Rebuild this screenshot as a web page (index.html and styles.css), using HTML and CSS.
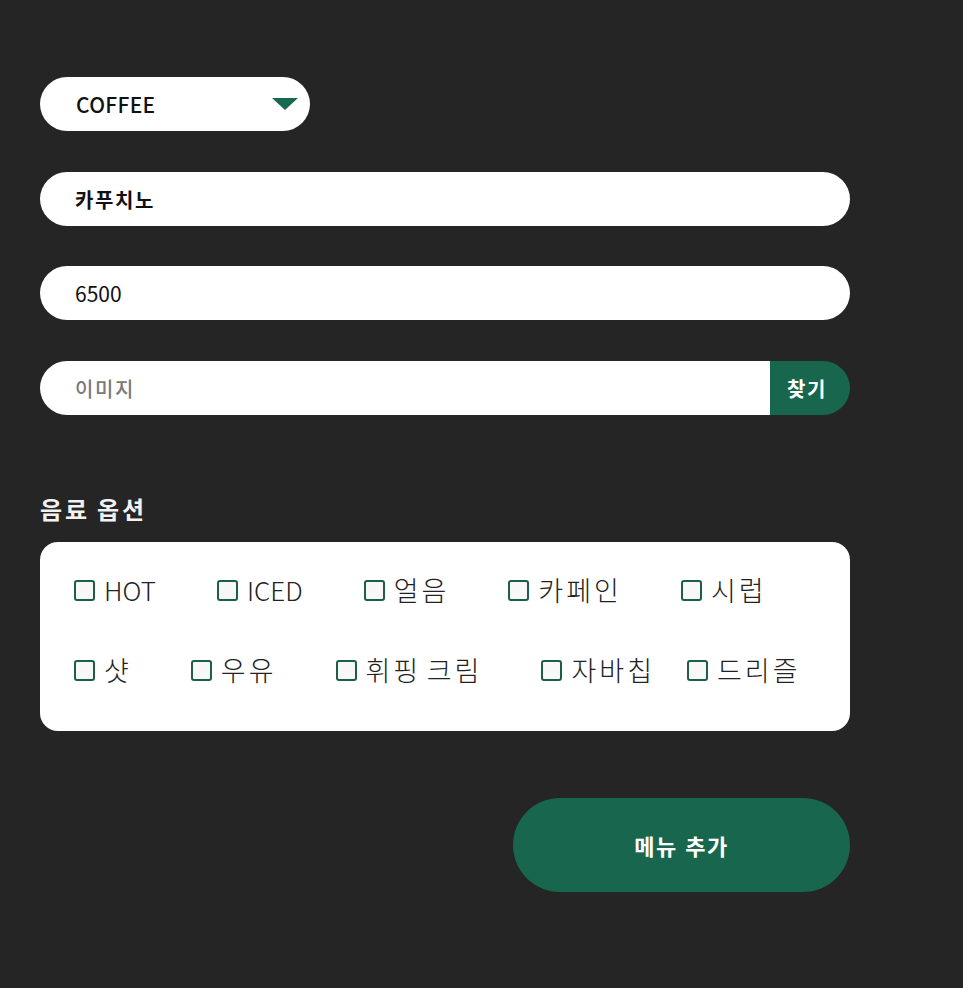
FILE: index.html
```html
<!DOCTYPE html>
<html lang="ko">
<head>
<meta charset="utf-8">
<title>메뉴 추가</title>
<link rel="stylesheet" href="styles.css">
</head>
<body>
<main class="form">
  <div class="select">
    <span class="select-value">COFFEE</span>
    <svg class="caret" width="26" height="12" viewBox="0 0 26 12"><polygon points="0,0 26,0 13,12" fill="#17694f"/></svg>
  </div>
  <div class="field field-bold ko">카푸치노</div>
  <div class="field field-regular">6500</div>
  <div class="file-row">
    <div class="field file-field placeholder ko">이미지</div>
    <button class="find-btn">찾기</button>
  </div>
  <h2 class="section-title">음료 옵션</h2>
  <div class="options">
    <div class="opt-row">
      <label class="opt"><span class="box"></span>HOT</label>
      <label class="opt"><span class="box"></span>ICED</label>
      <label class="opt ko"><span class="box"></span>얼음</label>
      <label class="opt ko"><span class="box"></span>카페인</label>
      <label class="opt ko"><span class="box"></span>시럽</label>
    </div>
    <div class="opt-row">
      <label class="opt ko"><span class="box"></span>샷</label>
      <label class="opt ko"><span class="box"></span>우유</label>
      <label class="opt ko"><span class="box"></span>휘핑 크림</label>
      <label class="opt ko opt-tight"><span class="box"></span>자바칩</label>
      <label class="opt ko"><span class="box"></span>드리즐</label>
    </div>
  </div>
  <div class="submit-row">
    <button class="submit-btn">메뉴 추가</button>
  </div>
</main>
</body>
</html>
```
FILE: styles.css
```css
* { box-sizing: border-box; }
html, body { margin: 0; padding: 0; }
body {
  background: #252525;
  font-family: "Noto Sans CJK KR", "Noto Sans", sans-serif;
  min-height: 988px;
}
.form {
  width: 810px;
  margin-left: 40px;
  padding-top: 77px;
  display: flex;
  flex-direction: column;
}
.select {
  width: 270px;
  height: 54px;
  background: #fff;
  border-radius: 27px;
  display: flex;
  align-items: center;
  justify-content: space-between;
  padding: 0 12px 0 36px;
}
.select-value {
  font-size: 21px;
  font-weight: 500;
  color: #111;
  letter-spacing: 0.3px;
}
.field {
  height: 54px;
  background: #fff;
  border-radius: 27px;
  display: flex;
  align-items: center;
  padding-left: 35px;
  font-size: 21px;
  color: #111;
  margin-top: 41px;
}
.field.ko { font-size: 20px; letter-spacing: 1.6px; }
.field-bold { font-weight: 700; }
.field-regular { font-weight: 400; }
.field + .field { margin-top: 40px; }
.file-row {
  display: flex;
  margin-top: 41px;
  height: 54px;
}
.file-field {
  margin-top: 0;
  flex: 1;
  border-radius: 27px 0 0 27px;
}
.placeholder { color: #7a7a7a; font-weight: 500; }
.find-btn {
  width: 80px;
  height: 54px;
  border: 0;
  background: #17664d;
  color: #fff;
  font-family: inherit;
  font-size: 20px;
  font-weight: 700;
  letter-spacing: 1.5px;
  border-radius: 0 27px 27px 0;
  padding: 0 6px 0 0;
}
.section-title {
  margin: 77px 0 0;
  color: #f2f2f2;
  font-size: 24px;
  font-weight: 700;
  line-height: 34px;
  letter-spacing: 3px;
  word-spacing: -3px;
}
.options {
  margin-top: 16px;
  background: #fff;
  border-radius: 18px;
  padding: 30px 34px 40px;
  height: 189px;
  display: flex;
  flex-direction: column;
  gap: 44px;
}
.opt-row {
  display: flex;
  align-items: center;
  height: 36px;
}
.opt {
  display: flex;
  align-items: center;
  font-size: 26px;
  font-weight: 300;
  color: #222;
  margin-right: 61px;
  line-height: 36px;
  white-space: nowrap;
}
.opt.ko { font-size: 27px; letter-spacing: 3px; word-spacing: -5px; margin-right: 59px; }
.opt:last-child { margin-right: 0; }
.opt.opt-tight { margin-right: 32px; }
.box {
  width: 21px;
  height: 21px;
  border: 2px solid #1b5e49;
  border-radius: 3px;
  background: #f7f7f7;
  margin-right: 9px;
  flex: none;
}
.submit-row {
  display: flex;
  justify-content: flex-end;
  margin-top: 67px;
}
.submit-btn {
  width: 337px;
  height: 94px;
  border: 0;
  border-radius: 47px;
  background: #17664d;
  color: #fff;
  font-family: inherit;
  font-size: 22px;
  font-weight: 700;
  letter-spacing: 1.5px;
}
```
